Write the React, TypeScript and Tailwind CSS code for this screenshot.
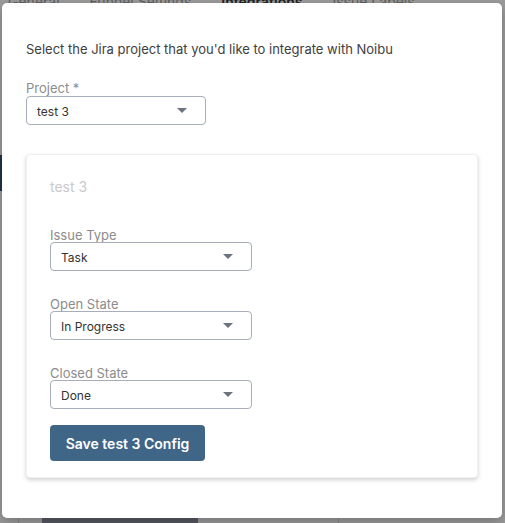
import React from "react";

function Arrow() {
  return (
    <svg width="10" height="5" viewBox="0 0 10 5" className="shrink-0">
      <path d="M0 0 L10 0 L5 5 Z" fill="#6b7280" />
    </svg>
  );
}

function Select({ value, width }: { value: string; width: string }) {
  return (
    <div
      className={`${width} h-[29px] flex items-center justify-between pl-[10px] pr-[18px] border border-[#a7adba] rounded-[4px] bg-white text-[12px] text-[#333333]`}
    >
      <span className="leading-none pt-[2px]">{value}</span>
      <Arrow />
    </div>
  );
}

function Field({ label, value }: { label: string; value: string }) {
  return (
    <div className="flex flex-col">
      <div className="h-[16px] text-[13px] leading-[19px] text-[#8c8c8c]">{label}</div>
      <Select value={value} width="w-[202px]" />
    </div>
  );
}

export default function App() {
  return (
    <div
      className="relative w-[505px] h-[523px] overflow-hidden bg-[#9b9b9b]"
      style={{ fontFamily: "Inter, 'Noto Sans', sans-serif" }}
    >
      {/* underlying page, dimmed */}
      <div className="absolute left-0 top-[-9px] flex gap-[30px] pl-[8px] text-[14px] text-[#5f5f5f]">
        <span>General</span>
        <span>Funnel Settings</span>
        <span className="font-semibold text-[#222222]">Integrations</span>
        <span>Issue Labels</span>
      </div>
      <div className="absolute left-0 top-[155px] w-[2px] h-[36px] bg-[#203448]" />
      <div className="absolute left-[18px] top-[518px] w-px h-[5px] bg-[#8a8a8a]" />
      <div className="absolute left-[42px] top-[518px] w-[156px] h-[5px] bg-[#565a61]" />
      <div className="absolute left-[338px] top-[518px] w-px h-[5px] bg-[#8a8a8a]" />

      {/* modal */}
      <div className="absolute left-[2px] top-[3px] w-[500px] h-[515px] bg-white rounded-[5px] shadow-[0_4px_12px_rgba(0,0,0,0.25)] px-6 pt-[36px]">
        <div className="text-[13px] leading-[20px] text-[#404040]">
          Select the Jira project that you'd like to integrate with Noibu
        </div>
        <div className="mt-[21px] flex flex-col">
          <div className="text-[13px] leading-[16px] text-[#8c8c8c]">Project *</div>
          <Select value="test 3" width="w-[180px]" />
        </div>

        <div className="mt-[29px] w-[452px] rounded-[4px] bg-white border border-[#f0f0f0] shadow-[0_2px_4px_rgba(0,0,0,0.18)] pl-[23px] pt-[22px] pb-[16px]">
          <div className="text-[14px] leading-[20px] text-[#c9c9c9]">test 3</div>
          <div className="mt-[29px] flex flex-col gap-[24px]">
            <Field label="Issue Type" value="Task" />
            <Field label="Open State" value="In Progress" />
            <Field label="Closed State" value="Done" />
          </div>
          <button className="mt-[16px] h-[36px] w-[155px] rounded-[4px] bg-[#3f6587] text-white text-[14px] font-semibold">
            Save test 3 Config
          </button>
        </div>
      </div>
    </div>
  );
}
